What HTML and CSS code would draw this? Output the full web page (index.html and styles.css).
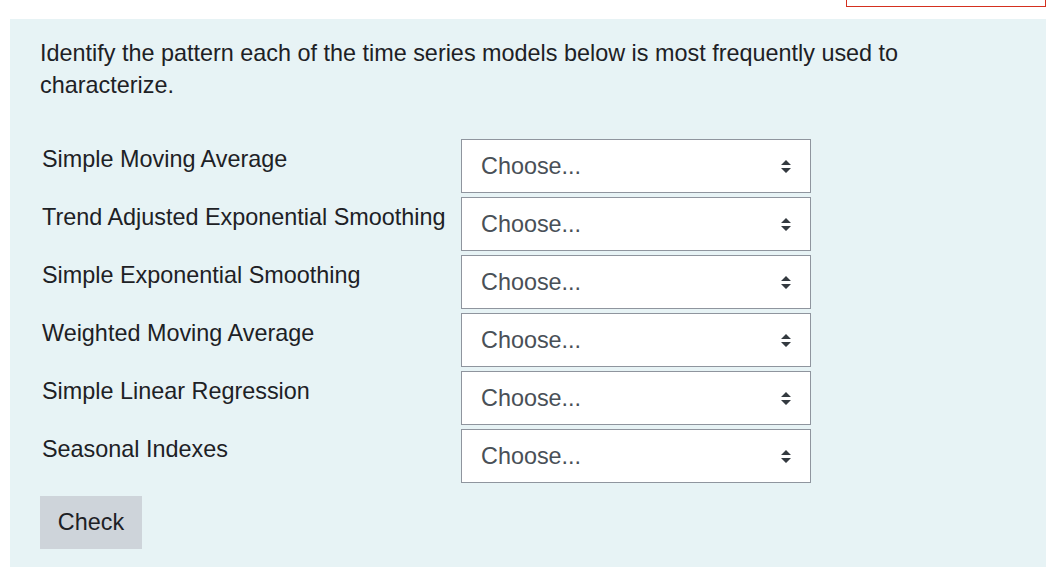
FILE: index.html
```html
<!DOCTYPE html>
<html lang="en">
<head>
<meta charset="utf-8">
<title>Match question</title>
<link rel="stylesheet" href="styles.css">
</head>
<body>
<div class="flag-box"></div>
<div class="formulation">
  <div class="qtext">Identify the pattern each of the time series models below is most frequently used to characterize.</div>
  <div class="answers">
    <div class="label">Simple Moving Average</div>
    <div class="select"><span>Choose...</span><svg class="arrow" width="10" height="13" viewBox="0 0 10 13"><path d="M5 0L10 5H0Z M5 13L0 8H10Z" fill="#343a40"/></svg></div>
    <div class="label">Trend Adjusted Exponential Smoothing</div>
    <div class="select"><span>Choose...</span><svg class="arrow" width="10" height="13" viewBox="0 0 10 13"><path d="M5 0L10 5H0Z M5 13L0 8H10Z" fill="#343a40"/></svg></div>
    <div class="label">Simple Exponential Smoothing</div>
    <div class="select"><span>Choose...</span><svg class="arrow" width="10" height="13" viewBox="0 0 10 13"><path d="M5 0L10 5H0Z M5 13L0 8H10Z" fill="#343a40"/></svg></div>
    <div class="label">Weighted Moving Average</div>
    <div class="select"><span>Choose...</span><svg class="arrow" width="10" height="13" viewBox="0 0 10 13"><path d="M5 0L10 5H0Z M5 13L0 8H10Z" fill="#343a40"/></svg></div>
    <div class="label">Simple Linear Regression</div>
    <div class="select"><span>Choose...</span><svg class="arrow" width="10" height="13" viewBox="0 0 10 13"><path d="M5 0L10 5H0Z M5 13L0 8H10Z" fill="#343a40"/></svg></div>
    <div class="label">Seasonal Indexes</div>
    <div class="select"><span>Choose...</span><svg class="arrow" width="10" height="13" viewBox="0 0 10 13"><path d="M5 0L10 5H0Z M5 13L0 8H10Z" fill="#343a40"/></svg></div>
  </div>
  <div class="actions"><button class="check" type="button">Check</button></div>
</div>
</body>
</html>
```
FILE: styles.css
```css
html, body {
  margin: 0;
  padding: 0;
  background: #ffffff;
}
body {
  font-family: "Liberation Sans", Arial, sans-serif;
  font-size: 23.4px;
  color: #1d2125;
  position: relative;
  width: 1063px;
  height: 583px;
  overflow: hidden;
}
.flag-box {
  position: absolute;
  left: 846px;
  top: -10px;
  width: 198px;
  height: 15px;
  border: 1px solid #d4301f;
}
.formulation {
  margin: 19px 17px 0 10px;
  background: #e7f3f5;
  padding: 18px 30px 18px 30px;
}
.qtext {
  line-height: 32px;
  margin-bottom: 38px;
}
.answers {
  display: grid;
  grid-template-columns: 421px 350px;
  row-gap: 4px;
  align-items: start;
}
.label {
  padding: 3px 0 0 2px;
  line-height: 34px;
  white-space: nowrap;
}
.select {
  box-sizing: border-box;
  height: 54px;
  background: #ffffff;
  border: 1px solid #8f959e;
  display: flex;
  align-items: center;
  justify-content: space-between;
  padding: 0 19px 0 19px;
  color: #495057;
}
.arrow {
  display: block;
}
.actions {
  margin-top: 13px;
}
.check {
  font-family: "Liberation Sans", Arial, sans-serif;
  font-size: 23.4px;
  color: #1d2125;
  background: #ced4da;
  border: none;
  width: 102px;
  height: 53px;
  padding: 0;
  display: block;
}
```
